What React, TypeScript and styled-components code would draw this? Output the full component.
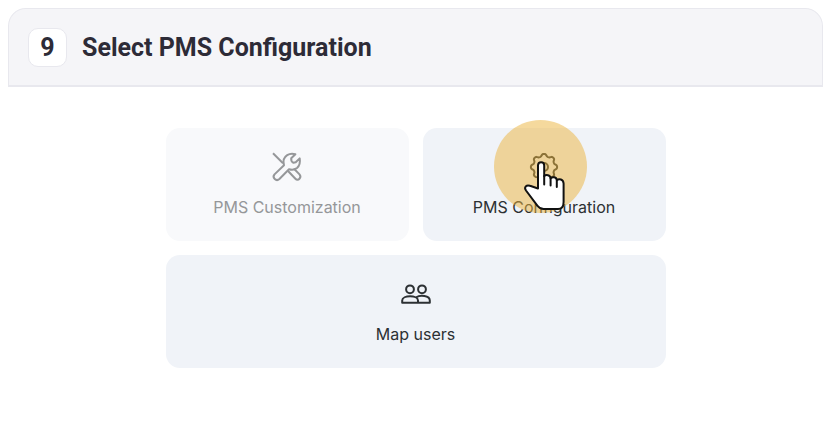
import React from "react";
import styled, { createGlobalStyle } from "styled-components";

const GlobalStyle = createGlobalStyle`
  *, *::before, *::after { box-sizing: border-box; }
  body { margin: 0; background: #ffffff; }
`;

const Page = styled.main`
  padding: 8px 11px 0 8px;
`;

const StepHeader = styled.header`
  display: flex;
  align-items: center;
  gap: 15px;
  padding: 19px 19px 18px;
  background: #f5f5f8;
  border: 1px solid #e8e8ee;
  border-bottom-width: 2px;
  border-radius: 18px 18px 0 0;
  color: #2d2b37;
  font-family: Roboto, sans-serif;
  font-weight: 700;
`;

const StepNumber = styled.span`
  display: grid;
  place-items: center;
  width: 39px;
  height: 39px;
  background: #ffffff;
  border: 1px solid #e8e8ee;
  border-radius: 10px;
  font-size: 25px;
  line-height: 36px;
`;

const StepTitle = styled.h1`
  margin: 0;
  font-size: 25px;
  line-height: 36px;
  font-weight: 700;
`;

const Options = styled.section`
  display: grid;
  grid-template-columns: 1fr 1fr;
  gap: 14px;
  width: 100%;
  max-width: 500px;
  margin: 41px auto 0;
`;

const Tile = styled.button<{ $wide?: boolean }>`
  position: relative;
  display: flex;
  flex-direction: column;
  align-items: center;
  gap: 13px;
  padding: 23px 16px 22px;
  grid-column: ${({ $wide }) => ($wide ? "1 / -1" : "auto")};
  background: #f0f3f8;
  border: 0;
  border-radius: 14px;
  color: #2c3033;
  font-family: Inter, sans-serif;
  font-size: 16px;
  line-height: 23px;
  cursor: pointer;

  &:disabled {
    background: #f8f9fb;
    color: #959799;
    cursor: default;
  }
`;

const Icon = styled.svg`
  display: block;
  width: 32px;
  height: 32px;
  fill: none;
  stroke: currentColor;
  stroke-width: 2;
  stroke-linecap: round;
  stroke-linejoin: round;
`;

const ClickMarker = styled.svg`
  position: absolute;
  top: -8px;
  left: calc(50% - 50px);
  width: 94px;
  height: 94px;
  pointer-events: none;
`;

const ToolsIcon = () => (
  <Icon viewBox="0 0 32 32" aria-hidden="true">
    <path d="M2 2.3 12 12.3" strokeLinecap="butt" />
    <path d="M13 14.3C11.8 10 13.2 6 16.2 4.1 18.7 2.5 21.5 2.4 24.4 3.2L20.2 7.2Q19.9 10.8 22.4 11.8L24.7 11.3 28.7 7.4C29.5 12 28.5 14.8 26 17 23.7 18.8 20.8 19 18 18.2L8.4 28C5.2 30.9.8 26.7 3.5 23.4Z" />
    <path d="M17.5 20.5 24.4 27.7C27.2 30.6 31 26.4 28.5 23.4L23.5 18.3" />
  </Icon>
);

const toothCount = 8;
const gearPath = (() => {
  const points: string[] = [];
  for (let i = 0; i < 96; i += 1) {
    const angle = (i / 96) * Math.PI * 2;
    const wave = Math.cos(toothCount * angle);
    const radius = 11.9 + 1.3 * Math.tanh(1.6 * wave);
    const x = 16 + radius * Math.sin(angle);
    const y = 16 - radius * Math.cos(angle);
    points.push(`${x.toFixed(2)} ${y.toFixed(2)}`);
  }
  return `M${points.join("L")}Z`;
})();

const GearIcon = () => (
  <Icon viewBox="0 0 32 32" aria-hidden="true">
    <path d={gearPath} />
    <circle cx="16" cy="16" r="4" />
  </Icon>
);

const UsersIcon = () => (
  <Icon viewBox="0 0 32 32" aria-hidden="true">
    <circle cx="10" cy="11.3" r="3.9" />
    <circle cx="22" cy="11.3" r="3.9" />
    <path d="M2.2 24.7V22.5C2.2 16.8 18 16.8 18 22.5V24.7ZM16.2 19.3C20 16.8 29.8 17.2 29.8 22.5V24.7H18" />
  </Icon>
);

const Pointer = () => (
  <ClickMarker viewBox="0 0 94 94" aria-hidden="true">
    <circle cx="46.5" cy="46.5" r="46.5" fill="#ecb33c" fillOpacity=".5" />
    <path
      d="M44 68.5V45.5C44 41.2 50.2 41.2 50.2 45.5V56.2C51.8 54.3 56.4 54.8 56.6 58.3 58.6 56.3 62.6 57 62.8 60.3 65 58.3 69.3 59.2 69.6 63.5V82C69.6 86.5 67.6 89 64 89H49.6C47 89 45 88 43.5 85.8L32 70.5C29.6 67 32.5 64.5 36 65.8Z"
      fill="#fff"
      stroke="#111"
      strokeWidth="2"
      strokeLinejoin="round"
    />
    <path
      d="M50.2 56V64.5M56.6 58V65.5M62.8 60.5V67"
      fill="none"
      stroke="#111"
      strokeWidth="2"
      strokeLinecap="round"
    />
  </ClickMarker>
);

export default function App() {
  return (
    <>
      <GlobalStyle />
      <Page>
        <StepHeader>
          <StepNumber>9</StepNumber>
          <StepTitle>Select PMS Configuration</StepTitle>
        </StepHeader>
        <Options aria-label="PMS options">
          <Tile type="button" disabled>
            <ToolsIcon />
            PMS Customization
          </Tile>
          <Tile type="button">
            <GearIcon />
            PMS Configuration
            <Pointer />
          </Tile>
          <Tile type="button" $wide>
            <UsersIcon />
            Map users
          </Tile>
        </Options>
      </Page>
    </>
  );
}
